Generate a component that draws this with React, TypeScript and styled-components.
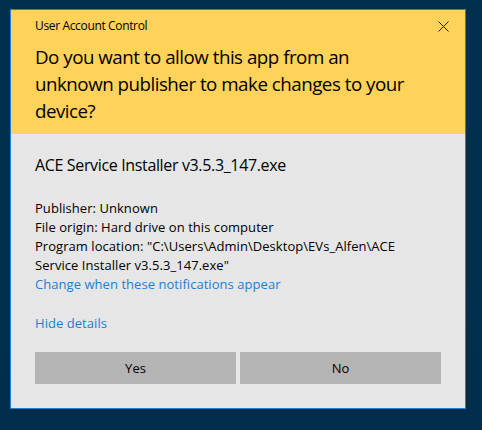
import React from "react";
import styled, { createGlobalStyle } from "styled-components";

const Global = createGlobalStyle`
  html, body { margin: 0; padding: 0; }
  body {
    width: 482px;
    height: 430px;
    overflow: hidden;
    background: linear-gradient(180deg, #01304f 0%, #012f4f 70%, #002d4c 100%);
    font-family: "Open Sans", "Noto Sans", sans-serif;
    color: #000;
  }
`;

const Screen = styled.div`
  padding: 9px 0 0 10px;
`;

const Dialog = styled.div`
  width: 456px;
  height: 400px;
  box-sizing: border-box;
  border: 1px solid #1a84d8;
  display: flex;
  flex-direction: column;
  background: #e6e6e6;
`;

const Header = styled.div`
  background: #ffd25a;
  height: 124px;
  box-sizing: border-box;
  display: flex;
  flex-direction: column;
`;

const TitleBar = styled.div`
  display: flex;
  align-items: center;
  justify-content: space-between;
  padding: 8px 16px 0 24px;
  height: 16px;
`;

const Title = styled.div`
  font-size: 12px;
  line-height: 16px;
  letter-spacing: -0.35px;
`;

const Close = styled.button`
  width: 12px;
  height: 12px;
  padding: 0;
  border: 0;
  background: transparent;
  display: flex;
  align-items: center;
  justify-content: center;
  color: #1a1a1a;
`;

const Heading = styled.div`
  margin-top: 9px;
  padding: 0 24px;
  font-size: 18.75px;
  line-height: 27px;
  letter-spacing: -0.5px;
  white-space: nowrap;
`;

const Body = styled.div`
  flex: 1;
  display: flex;
  flex-direction: column;
  padding: 20px 24px 24px 24px;
`;

const AppName = styled.div`
  font-size: 16px;
  line-height: 22px;
  letter-spacing: -0.35px;
`;

const Details = styled.div`
  margin-top: 23px;
  font-size: 13px;
  line-height: 19px;
  letter-spacing: 0.05px;
  white-space: nowrap;
`;

const Link = styled.a<{ $gap?: number }>`
  display: block;
  color: #1a7fd6;
  text-decoration: none;
  font-size: 13px;
  line-height: 19px;
  letter-spacing: 0.05px;
  margin-top: ${(p) => p.$gap ?? 0}px;
  width: fit-content;
`;

const Buttons = styled.div`
  margin-top: auto;
  display: grid;
  grid-template-columns: 1fr 1fr;
  gap: 4px;
`;

const Button = styled.button`
  height: 32px;
  border: 0;
  background: #b4b4b4;
  font-family: inherit;
  font-size: 13px;
  color: #000;
  padding: 0;
`;

export default function App() {
  return (
    <>
      <Global />
      <Screen>
        <Dialog>
          <Header>
            <TitleBar>
              <Title>User Account Control</Title>
              <Close aria-label="Close">
                <svg width="11" height="11" viewBox="0 0 11 11">
                  <path d="M0.5 0.5 L10.5 10.5 M10.5 0.5 L0.5 10.5" stroke="#1a1a1a" strokeWidth="1" />
                </svg>
              </Close>
            </TitleBar>
            <Heading>
              Do you want to allow this app from an
              <br />
              unknown publisher to make changes to your
              <br />
              device?
            </Heading>
          </Header>
          <Body>
            <AppName>ACE Service Installer v3.5.3_147.exe</AppName>
            <Details>
              Publisher: Unknown
              <br />
              File origin: Hard drive on this computer
              <br />
              Program location: "C:\Users\Admin\Desktop\EVs_Alfen\ACE
              <br />
              Service Installer v3.5.3_147.exe"
            </Details>
            <Link href="#">Change when these notifications appear</Link>
            <Link href="#" $gap={20}>Hide details</Link>
            <Buttons>
              <Button>Yes</Button>
              <Button>No</Button>
            </Buttons>
          </Body>
        </Dialog>
      </Screen>
    </>
  );
}
